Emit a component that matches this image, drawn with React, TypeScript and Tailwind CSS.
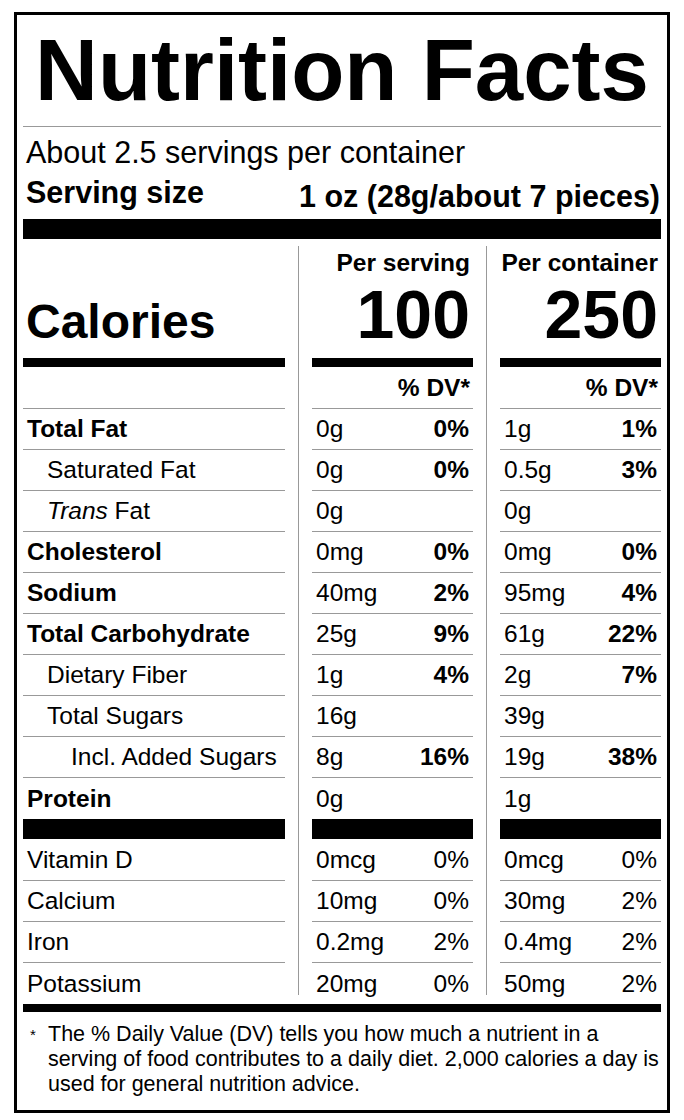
import React from "react";

type Row = {
  label: React.ReactNode;
  bold?: boolean;
  indent?: 0 | 1 | 2;
  a: string;
  ap?: string;
  b: string;
  bp?: string;
};

const nutrients: Row[] = [
  { label: "Total Fat", bold: true, a: "0g", ap: "0%", b: "1g", bp: "1%" },
  { label: "Saturated Fat", indent: 1, a: "0g", ap: "0%", b: "0.5g", bp: "3%" },
  {
    label: (
      <span>
        <span className="italic">Trans</span>
        {" Fat"}
      </span>
    ),
    indent: 1,
    a: "0g",
    b: "0g",
  },
  { label: "Cholesterol", bold: true, a: "0mg", ap: "0%", b: "0mg", bp: "0%" },
  { label: "Sodium", bold: true, a: "40mg", ap: "2%", b: "95mg", bp: "4%" },
  { label: "Total Carbohydrate", bold: true, a: "25g", ap: "9%", b: "61g", bp: "22%" },
  { label: "Dietary Fiber", indent: 1, a: "1g", ap: "4%", b: "2g", bp: "7%" },
  { label: "Total Sugars", indent: 1, a: "16g", b: "39g" },
  { label: "Incl. Added Sugars", indent: 2, a: "8g", ap: "16%", b: "19g", bp: "38%" },
];

const vitamins: Row[] = [
  { label: "Vitamin D", a: "0mcg", ap: "0%", b: "0mcg", bp: "0%" },
  { label: "Calcium", a: "10mg", ap: "0%", b: "30mg", bp: "2%" },
  { label: "Iron", a: "0.2mg", ap: "2%", b: "0.4mg", bp: "2%" },
  { label: "Potassium", a: "20mg", ap: "0%", b: "50mg", bp: "2%" },
];

const rowH = (last: boolean, first: boolean) =>
  last ? "h-[41px]" : first ? "h-[42px] border-b border-[#999]" : "h-[41px] border-b border-[#999]";

function LabelColumn() {
  return (
    <div className="flex w-[262px] flex-col">
      <div className="flex h-[112px] items-end pb-[12px] pl-[3px]">
        <span className="text-[48px] font-bold leading-[48px]">Calories</span>
      </div>
      <div className="h-[9px] bg-black" />
      <div className="h-[42px] border-b border-[#999]" />
      {nutrients.map((r, i) => (
        <div
          key={i}
          className={`flex h-[41px] items-center whitespace-nowrap border-b border-[#999] text-[24.5px] leading-[40px] ${
            r.bold ? "font-bold" : ""
          } ${r.indent === 2 ? "pl-[48px]" : r.indent === 1 ? "pl-[24px]" : "pl-[4px]"}`}
        >
          <span>{r.label}</span>
        </div>
      ))}
      <div className="flex h-[41px] items-center pl-[4px] text-[24.5px] font-bold leading-[40px]">
        <span>Protein</span>
      </div>
      <div className="h-[20px] bg-black" />
      {vitamins.map((r, i) => (
        <div
          key={i}
          className={`flex items-center pl-[4px] text-[24.5px] leading-[40px] ${rowH(i === 3, i === 0)}`}
        >
          <span>{r.label}</span>
        </div>
      ))}
    </div>
  );
}

function ValueColumn({ title, total, which }: { title: string; total: string; which: "a" | "b" }) {
  const pk = which === "a" ? "ap" : "bp";
  return (
    <div className="flex w-[161px] flex-col">
      <div className="flex h-[112px] flex-col items-end pr-[3px] pt-[2px]">
        <span className="whitespace-nowrap text-[24.5px] font-bold leading-[30px]">{title}</span>
        <span className="mt-[2px] text-[68px] font-bold leading-[68px]">{total}</span>
      </div>
      <div className="h-[9px] bg-black" />
      <div className="flex h-[42px] items-center justify-end border-b border-[#999] pr-[3px] text-[24.5px] font-bold leading-[40px]">
        <span>% DV*</span>
      </div>
      {nutrients.map((r, i) => (
        <div
          key={i}
          className="flex h-[41px] items-center justify-between border-b border-[#999] px-[4px] text-[24.5px] leading-[40px]"
        >
          <span>{r[which]}</span>
          <span className="font-bold">{r[pk] ?? ""}</span>
        </div>
      ))}
      <div className="flex h-[41px] items-center px-[4px] text-[24.5px] leading-[40px]">
        <span>{which === "a" ? "0g" : "1g"}</span>
      </div>
      <div className="h-[20px] bg-black" />
      {vitamins.map((r, i) => (
        <div
          key={i}
          className={`flex items-center justify-between px-[4px] text-[24.5px] leading-[40px] ${rowH(i === 3, i === 0)}`}
        >
          <span>{r[which]}</span>
          <span>{r[pk]}</span>
        </div>
      ))}
    </div>
  );
}

function Divider() {
  return (
    <div className="flex w-[27px] justify-center pb-[9px]">
      <div className="w-px bg-[#999]" />
    </div>
  );
}

export default function App() {
  return (
    <div className="min-h-[1120px] bg-white pl-[14px] pt-[12px] font-['Liberation_Sans',Arial,Helvetica,sans-serif] text-black">
      <div className="w-[656px] border-[3px] border-black px-[6px]">
        <h1 className="pb-[13px] pt-[11px] text-center text-[87px] font-bold leading-[87px]">Nutrition Facts</h1>
        <div className="h-px bg-[#999]" />
        <div className="pl-[3px] pt-[5px] text-[30.5px] leading-[40px]">About 2.5 servings per container</div>
        <div className="flex items-start justify-between pl-[3px] pr-[1px] text-[30.5px] font-bold leading-[40px]">
          <span>Serving size</span>
          <span className="pt-[4px]">1 oz (28g/about 7 pieces)</span>
        </div>
        <div className="mt-[3px] h-[20px] bg-black" />
        <div className="mt-[7px] flex">
          <LabelColumn />
          <Divider />
          <ValueColumn title="Per serving" total="100" which="a" />
          <Divider />
          <ValueColumn title="Per container" total="250" which="b" />
        </div>
        <div className="h-[8px] bg-black" />
        <div className="flex pb-[13px] pt-[10px]">
          <span className="w-[25px] shrink-0 pl-[7px] text-[15px] leading-[25px]">*</span>
          <p className="whitespace-nowrap text-[21.5px] leading-[25px]">
            The % Daily Value (DV) tells you how much a nutrient in a
            <br />
            serving of food contributes to a daily diet. 2,000 calories a day is
            <br />
            used for general nutrition advice.
          </p>
        </div>
      </div>
    </div>
  );
}
